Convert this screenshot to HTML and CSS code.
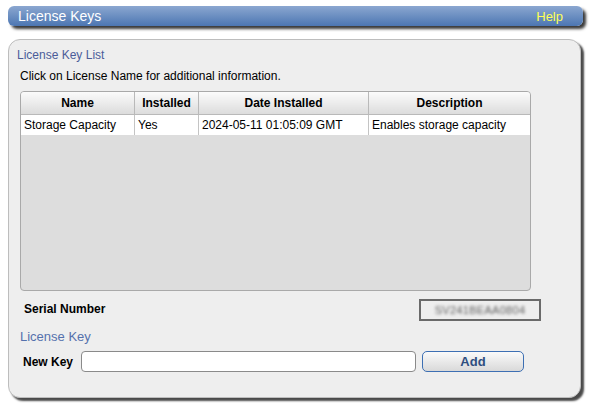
FILE: index.html
```html
<!DOCTYPE html>
<html>
<head>
<meta charset="utf-8">
<link rel="stylesheet" href="styles.css">
</head>
<body>
<div class="header">
  <span class="header-title">License Keys</span>
  <span class="header-help">Help</span>
</div>
<div class="panel">
  <div class="section-title">License Key List</div>
  <div class="hint">Click on License Name for additional information.</div>
  <div class="table-box">
    <table class="grid">
      <thead>
        <tr>
          <th class="c-name">Name</th>
          <th class="c-inst">Installed</th>
          <th class="c-date">Date Installed</th>
          <th class="c-desc">Description</th>
        </tr>
      </thead>
      <tbody>
        <tr>
          <td>Storage Capacity</td>
          <td>Yes</td>
          <td>2024-05-11 01:05:09 GMT</td>
          <td>Enables storage capacity</td>
        </tr>
      </tbody>
    </table>
  </div>
  <div class="serial-row">
    <span class="label serial-label">Serial Number</span>
    <span class="serial-box"><span class="serial-text">SV241BEAA0804</span></span>
  </div>
  <div class="section-title key-title">License Key</div>
  <div class="key-row">
    <span class="label">New Key</span>
    <input class="key-input" type="text">
    <button class="add-btn">Add</button>
  </div>
</div>
</body>
</html>
```

FILE: styles.css
```css
html, body {
  margin: 0;
  padding: 0;
  background: #ffffff;
}
body {
  font-family: "Liberation Sans", Arial, sans-serif;
  font-size: 12px;
  color: #000;
  padding: 6px 0 9px 8px;
}
.header {
  width: 575px;
  height: 20px;
  box-sizing: border-box;
  border-radius: 6px;
  background: linear-gradient(#8ba7d0, #4c76b2);
  box-shadow: 3px 3px 3px #3a3a3a;
  display: flex;
  align-items: center;
  justify-content: space-between;
  padding: 0 20px 0 10px;
}
.header-title {
  color: #ffffff;
  font-size: 14px;
}
.header-help {
  color: #ffff55;
  font-size: 13px;
}
.panel {
  margin-top: 13px;
  width: 573px;
  height: 359px;
  box-sizing: border-box;
  background: #eeeeee;
  border: 1px solid #bdbdbd;
  border-radius: 12px;
  box-shadow: 3px 3px 2px #4a4a4a;
  padding: 8px 0 0 8px;
}
.section-title {
  color: #4b5c99;
  font-size: 12px;
  line-height: 14px;
}
.hint {
  margin-top: 7px;
  margin-left: 3px;
  line-height: 14px;
}
.table-box {
  margin-top: 8px;
  margin-left: 3px;
  width: 511px;
  height: 200px;
  box-sizing: border-box;
  border: 1px solid #a9a9a9;
  border-radius: 4px;
  background: #dddddd;
  overflow: hidden;
}
.grid {
  border-collapse: collapse;
  width: 509px;
  table-layout: fixed;
}
.grid th {
  height: 22px;
  padding: 0;
  font-weight: bold;
  text-align: center;
  background: linear-gradient(#fbfbfb, #dcdcdc);
  border-right: 1px solid #b9b9b9;
  border-bottom: 1px solid #b9b9b9;
}
.grid th:last-child, .grid td:last-child {
  border-right: none;
}
.grid td {
  height: 20px;
  padding: 0 0 0 3px;
  background: #ffffff;
  border-right: 1px solid #c4c4c4;
  white-space: nowrap;
  font-weight: normal;
}
.c-name { width: 113px; }
.c-inst { width: 63px; }
.c-date { width: 169px; }
.serial-row {
  margin-top: 8px;
  height: 22px;
  display: flex;
  align-items: center;
}
.label {
  font-weight: bold;
}
.serial-label {
  margin-left: 7px;
  margin-top: -3px;
  width: 395px;
}
.serial-box {
  width: 122px;
  height: 22px;
  box-sizing: border-box;
  border: 2px solid #6a6a6a;
  display: flex;
  align-items: center;
  justify-content: center;
  overflow: hidden;
}
.serial-text {
  color: #606060;
  font-size: 11px;
  letter-spacing: 0.3px;
  filter: blur(1.4px);
}
.key-title {
  margin-top: 8px;
  margin-left: 3px;
  font-size: 13px;
  line-height: 15px;
  color: #5571ad;
}
.key-row {
  margin-top: 7px;
  display: flex;
  align-items: center;
  height: 21px;
}
.key-row .label {
  margin-left: 6px;
  width: 58px;
}
.key-input {
  width: 335px;
  height: 21px;
  box-sizing: border-box;
  border: 1px solid #8a8a8a;
  border-radius: 4px;
  background: #fff;
  margin: 0;
  padding: 0 4px;
}
.add-btn {
  margin-left: 6px;
  width: 102px;
  height: 21px;
  box-sizing: border-box;
  border: 1px solid #3d6fb3;
  border-radius: 5px;
  background: linear-gradient(#fafafa, #d9d9d9);
  color: #2f4f80;
  font-family: "Liberation Sans", Arial, sans-serif;
  font-weight: bold;
  font-size: 13px;
  padding: 0;
}
```
